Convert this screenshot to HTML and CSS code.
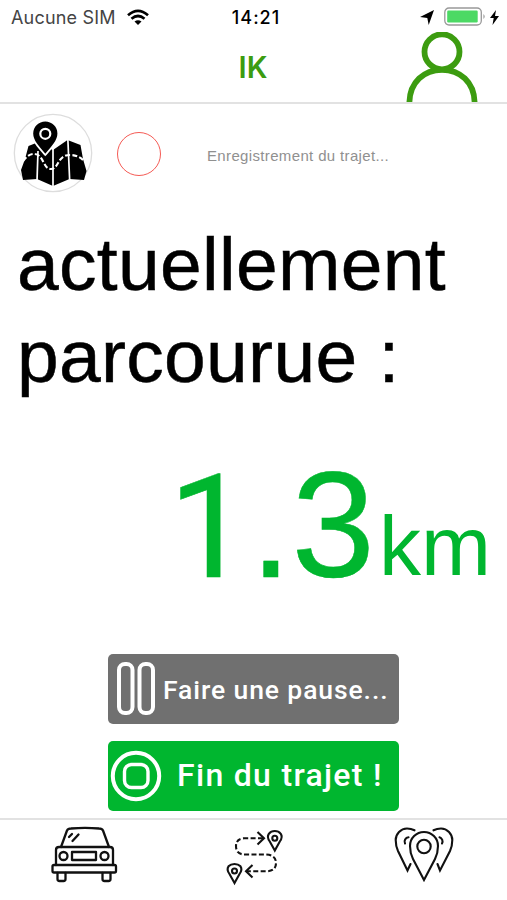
FILE: index.html
```html
<!DOCTYPE html>
<html lang="fr">
<head>
<meta charset="utf-8">
<title>IK</title>
<link rel="stylesheet" href="styles.css">
</head>
<body>
<div class="status">
  <div class="carrier"><span>Aucune SIM</span>
    <svg width="22" height="17" viewBox="0 0 22 17"><g fill="none" stroke="#000" stroke-width="2.7"><path d="M1 6.2Q11-2.5 21 6.2"/><path d="M4.5 9.8Q11 4.2 17.5 9.8"/></g><path d="M7.5 12.6Q11 9.8 14.5 12.6L11 16Z"/></svg>
  </div>
  <span class="time">14:21</span>
  <div class="power">
    <svg width="14" height="15" viewBox="0 0 14 15"><path d="M14 0L8.7 15L7.3 8L0 7Z"/></svg>
    <svg width="44" height="20" viewBox="0 0 44 20"><rect x=".8" y="1" width="36.5" height="17" rx="4.2" fill="#fff" stroke="#999" stroke-width="1.3"/><rect x="3.2" y="3.5" width="30.5" height="12" rx="1.2" fill="#4cd964"/><path d="M39.5 7Q41.7 9.5 39.5 12Z" fill="#888"/></svg>
    <svg width="9" height="15" viewBox="0 0 9 15"><path d="M6 0L0 8H3.7L2.5 15L9 6H5Z"/></svg>
  </div>
</div>
<header class="nav">
  <span></span>
  <h1>IK</h1>
  <svg class="user" width="72" height="70" viewBox="0 0 72 70"><g fill="none" stroke="#3c9c10" stroke-width="5.8"><circle cx="36" cy="19.8" r="17.5"/><path d="M3.4 70C4 50 18 37.8 36 37.8S68 50 68.6 70"/></g></svg>
</header>
<main>
  <div class="recording">
    <svg width="80" height="80" viewBox="0 0 80 80"><circle cx="40" cy="40" r="38.7" fill="#fff" stroke="#ddd" stroke-width="1.3"/>
      <path d="M15.5 33L23 30L40 37L54.5 27L67.5 32L70 46L73.5 58L71 67L56.5 66L40 73L24 66L10 67L8 57L12 46Z"/>
      <g fill="none" stroke="#fff" stroke-width="1.7"><path d="M25 38L24 68M40 36V74M54.8 25L56.7 68"/><path d="M10 48Q16 40 22 41C31 42 30 56 38 56C46 56 44 42 57 42Q65 42 70 47" stroke-width="2.1" stroke-dasharray="5 2.2"/></g>
      <path d="M32.3 42C26 35 19.3 28 19.3 20.5A13 13 0 0 1 45.3 20.5C45.3 28 38.5 35 32.3 42Z" stroke="#fff" stroke-width="1.8"/><circle cx="32.3" cy="20.8" r="5" fill="none" stroke="#fff" stroke-width="2.2"/>
    </svg>
    <span class="ring"></span>
    <span class="note">Enregistrement du trajet...</span>
  </div>
  <p class="label">actuellement<br>parcourue :</p>
  <div class="distance"><span class="value"><span class="one">1</span>.3</span><span class="unit">km</span></div>
  <div class="actions">
    <button class="pause">
      <svg width="40" height="54" viewBox="0 0 40 54"><g fill="none" stroke="#fff" stroke-width="4"><rect x="3" y="2" width="13.5" height="49" rx="6"/><rect x="23.5" y="2" width="13.5" height="49" rx="6"/></g></svg>
      <span>Faire une pause...</span>
    </button>
    <button class="stop">
      <svg width="52" height="52" viewBox="0 0 52 52"><g fill="none" stroke="#fff"><circle cx="26" cy="26" r="23.2" stroke-width="4"/><rect x="14.5" y="14.5" width="23.5" height="23" rx="7" stroke-width="3.4"/></g></svg>
      <span>Fin du trajet !</span>
    </button>
  </div>
</main>
<nav class="tabs">
  <a><svg width="90" height="80" viewBox="0 0 90 80"><g fill="none" stroke="#111" stroke-width="2.3" stroke-linejoin="round" stroke-linecap="round"><path d="M21 32L27 15.5Q28 13.5 31 13.5Q45 12.3 59 13.5Q62 13.5 63 15.5L69 32"/><path d="M16 50V35Q16 32 19 32H70Q73 32 73 35V50"/><rect x="12.5" y="50" width="63.5" height="7.5" rx="1.5"/><path d="M17.5 58V64Q17.5 66 19.5 66H23.5Q25.5 66 25.5 64V58M62.5 58V64Q62.5 66 64.5 66H68.5Q70.5 66 70.5 64V58"/><circle cx="23.5" cy="41" r="4"/><circle cx="64.5" cy="41" r="4"/><rect x="32" y="37" width="24" height="8"/><path d="M29 22L32 19M32.5 26L38.5 19.5"/></g></svg></a>
  <a class="route"><svg width="80" height="80" viewBox="0 0 80 80"><g fill="none" stroke="#111" stroke-width="2.1"><path d="M59.8 35.5L54.8 26.5Q51.6 22 53.8 18.8Q56 16 59.8 16T65.8 18.8Q68 22 64.8 26.5Z"/><circle cx="59.8" cy="23.2" r="2.5"/><path d="M19.5 68L14.5 59Q11.3 54.5 13.5 51.3Q15.7 49 19.5 49T25.5 51.3Q27.7 54.5 24.5 59Z"/><circle cx="19.5" cy="56" r="2.5"/><path d="M42.5 17L49 23.3L42.5 29.5M37.5 50L31 56.3L37.5 62.5"/><path d="M48 23.3H29Q21 24 21 31Q21 39.5 30 39.5H51Q61 40 61 48Q61 56.3 51 56.3H32" stroke-dasharray="5 2.4"/></g></svg></a>
  <a><svg width="80" height="80" viewBox="0 0 80 80"><g fill="none" stroke="#111" stroke-width="2.1" stroke-linecap="round"><path d="M39 65L28 44Q25 38 25 31A14 14 0 0 1 53 31Q53 38 50 44Z"/><circle cx="39" cy="31.5" r="6.7"/><path d="M29.5 15.3Q26 13.5 22 13.5A11.5 11.5 0 0 0 10.7 25Q10.7 31 13 36L22.5 55.5L25.5 49"/><path d="M48.5 15.3Q52 13.5 56 13.5A11.5 11.5 0 0 1 67.3 25Q67.3 31 65 36L55 55.5L52.5 49"/><path d="M23.5 22.3A4.3 4.3 0 0 0 20 28.5M54.5 22.3A4.3 4.3 0 0 1 57 28.5"/></g></svg></a>
</nav>
</body>
</html>
```
FILE: styles.css
```css
* { box-sizing: border-box; }
body { margin: 0; width: 507px; height: 900px; overflow: hidden; background: #fff; color: #000; font-family: "Liberation Sans", sans-serif; display: flex; flex-direction: column; }
svg { display: block; flex: none; }
.status { height: 32px; flex: none; padding: 2px 8px 0 11px; display: grid; grid-template-columns: 1fr auto 1fr; align-items: center; font-family: Inter, sans-serif; font-size: 18px; }
.carrier { display: flex; align-items: center; gap: 11px; color: #444; white-space: nowrap; letter-spacing: .2px; }
.time { font-weight: 500; font-size: 18px; letter-spacing: 1px; padding-left: 2px; }
.power { display: flex; justify-content: flex-end; align-items: center; gap: 9px; }
.power svg:first-child { margin-right: 1px; }
.power svg:last-child { margin-left: -7px; }
.nav { height: 72px; flex: none; border-bottom: 2px solid #e2e2e2; display: grid; grid-template-columns: 1fr auto 1fr; align-items: start; padding: 0 29px 0 28px; }
.nav h1 { margin: 17px 0 0; font: 600 29.5px/36px Inter, sans-serif; color: #3c9c10; }
.user { justify-self: end; }
main { flex: 1; min-height: 0; }
.recording { height: 114px; padding: 9px 0 0 12.5px; display: flex; align-items: flex-start; }
.ring { width: 44px; height: 44px; border: 1.5px solid #f55b55; border-radius: 50%; margin: 19px 0 0 24px; }
.note { margin: 34px 0 0 46.5px; font-size: 15px; line-height: 17px; color: #909090; letter-spacing: .35px; white-space: nowrap; }
.label { margin: 0; padding-left: 17px; font-size: 75px; line-height: 92px; letter-spacing: .3px; white-space: nowrap; -webkit-text-stroke: .5px #000; }
.distance { height: 252px; padding: 43px 16px 0 0; color: #00b62f; display: flex; justify-content: flex-end; align-items: baseline; line-height: 160px; }
.value { font-size: 150px; -webkit-text-stroke: .5px #00b62f; }
.one { font-family: Roboto, sans-serif; font-size: 145px; }
.unit { font-size: 84px; margin-left: 4px; line-height: 1; position: relative; top: -2px; }
.actions { display: flex; flex-direction: column; align-items: center; gap: 17px; }
.actions button { width: 291px; height: 70px; border: 0; border-radius: 5px; padding: 0; color: #fff; font-family: Roboto, sans-serif; font-weight: 500; white-space: nowrap; display: flex; align-items: center; }
.pause { background: #707070; font-size: 26.5px; letter-spacing: .9px; }
.pause svg { margin: 0 7px 0 8px; }
.stop { background: #00b62f; font-size: 32px; letter-spacing: 1.3px; }
.stop svg { margin: 0 15px 0 2px; }
.stop span { margin-top: -3px; }
.tabs { height: 82px; flex: none; border-top: 2px solid #e2e2e2; display: flex; justify-content: space-between; padding: 0 42px 0 40px; }
.tabs svg { margin-top: -5px; }
.route { margin-right: 5px; }
```
